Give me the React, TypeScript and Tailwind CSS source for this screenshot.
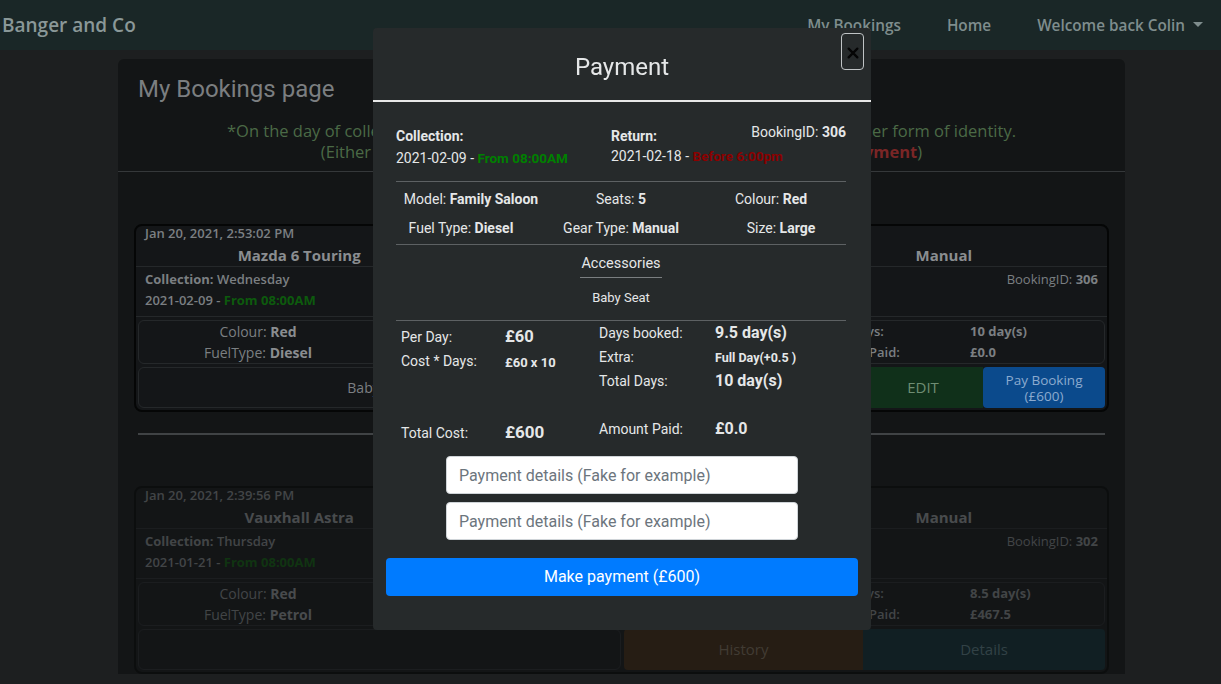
import React from 'react';

const sans = { fontFamily: '"Open Sans", "Noto Sans", sans-serif' };

interface Booking {
  created: string;
  car: string;
  type: string;
  gear: string;
  day: string;
  date: string;
  id: number;
  colour: string;
  fuel: string;
  perDay: string;
  cost: string;
  days: string;
  paid: string;
  accessories: string;
}

const bookings: Booking[] = [
  {
    created: 'Jan 20, 2021, 2:53:02 PM',
    car: 'Mazda 6 Touring',
    type: 'Family Saloon',
    gear: 'Manual',
    day: 'Wednesday',
    date: '2021-02-09',
    id: 306,
    colour: 'Red',
    fuel: 'Diesel',
    perDay: '£60',
    cost: '£600',
    days: '10 day(s)',
    paid: '£0.0',
    accessories: 'Baby Seat',
  },
  {
    created: 'Jan 20, 2021, 2:39:56 PM',
    car: 'Vauxhall Astra',
    type: 'Small Town Car',
    gear: 'Manual',
    day: 'Thursday',
    date: '2021-01-21',
    id: 302,
    colour: 'Red',
    fuel: 'Petrol',
    perDay: '£55',
    cost: '£467.5',
    days: '8.5 day(s)',
    paid: '£467.5',
    accessories: '',
  },
];

function BookingCard({ b, past }: { b: Booking; past?: boolean }) {
  return (
    <div
      className={`rounded-lg border-2 border-[#050606] bg-[#141618] text-[13px] text-[#7b7f82] ${
        past ? 'opacity-45' : ''
      }`}
      style={sans}
    >
      <div className="border-b border-[#25282a]">
        <div className="px-[9px] font-semibold leading-[14px]">{b.created}</div>
        <div className="grid grid-cols-3 px-[2px] pt-[5px] pb-[1px] text-[15px] font-bold leading-[20px] text-[#8a8d90]">
          <div className="text-center">{b.car}</div>
          <div className="text-center">{b.type}</div>
          <div className="text-center">{b.gear}</div>
        </div>
      </div>
      <div className="grid grid-cols-3 border-b border-[#25282a] px-[9px] pt-[2px] pb-[5px] font-semibold leading-[21px]">
        <div>
          <div>
            <b className="font-bold">Collection:</b> {b.day}
          </div>
          <div>
            {b.date} - <span className="font-bold text-[#0d5a0d]">From 08:00AM</span>
          </div>
        </div>
        <div>
          <div>
            <b className="font-bold">Return:</b> Friday
          </div>
          <div>
            2021-02-18 - <span className="font-bold text-[#5a0d0d]">Before 6:00pm</span>
          </div>
        </div>
        <div className="text-right font-normal">
          BookingID: <b className="font-bold">{b.id}</b>
        </div>
      </div>
      <div className="flex gap-[3px] px-[2px] pt-[3px]">
        <div className="flex h-[44px] w-[240px] flex-col items-center justify-center rounded-md border border-[#25282a] text-[14px] leading-[21px]">
          <div>
            Colour: <b className="text-[#8a8d90]">{b.colour}</b>
          </div>
          <div>
            FuelType: <b className="text-[#8a8d90]">{b.fuel}</b>
          </div>
        </div>
        <div className="flex h-[44px] w-[240px] flex-col items-center justify-center rounded-md border border-[#25282a] text-[14px] leading-[21px]">
          <div>
            Seats: <b>5</b>
          </div>
          <div>
            Size: <b>Large</b>
          </div>
        </div>
        <div className="flex h-[44px] flex-1 items-center rounded-md border border-[#25282a] font-semibold leading-[21px]">
          <div className="w-[80px] pl-[8px]">
            <div>Per Day:</div>
            <div>Cost:</div>
          </div>
          <div className="w-[110px]">
            <div className="font-bold">{b.perDay}</div>
            <div className="font-bold">{b.cost}</div>
          </div>
          <div className="w-[155px]">
            <div>Total Days:</div>
            <div>Amount Paid:</div>
          </div>
          <div className="font-bold">
            <div>{b.days}</div>
            <div>{b.paid}</div>
          </div>
        </div>
      </div>
      <div className="flex px-[2px] pt-[3px] pb-[2px]">
        <div className="flex h-[41px] w-[483px] items-center justify-center rounded-md border border-[#25282a] text-[14px]">
          {b.accessories}
        </div>
        {past ? (
          <div className="ml-[3px] flex flex-1 text-[15px]">
            <div className="flex w-[239px] items-center justify-center rounded-l bg-[#3d2712] text-[#7a6a58]">
              History
            </div>
            <div className="flex flex-1 items-center justify-center rounded-r bg-[#0f2c33] text-[#587880]">
              Details
            </div>
          </div>
        ) : (
          <div className="ml-[3px] flex flex-1 text-[15px]">
            <div className="flex w-[119px] items-center justify-center rounded-l bg-[#3d2712] text-[#8a7a68]">
              History
            </div>
            <div className="flex w-[120px] items-center justify-center bg-[#4a1014] text-[#9a7a7a]">
              Cancel
            </div>
            <div className="flex w-[120px] items-center justify-center bg-[#10301a] text-[#6f8d73]">
              EDIT
            </div>
            <div className="flex flex-1 flex-col items-center justify-center rounded bg-[#0b4a8c] text-[13.5px] leading-[16px] text-[#8cabcf]">
              <span>Pay Booking</span>
              <span>(£600)</span>
            </div>
          </div>
        )}
      </div>
    </div>
  );
}

function PaymentModal() {
  return (
    <div className="fixed inset-0 z-10">
      <div
        className="ml-[373px] mt-[28px] w-[498px] rounded bg-[#262a2b] text-[#e5e7e8]"
        style={{ fontFamily: 'Roboto, "Liberation Sans", sans-serif' }}
      >
        <div className="relative flex h-[74px] items-center justify-center border-b-2 border-[#e8e8e8]">
          <h2 className="pt-[5px] text-[24px] font-normal">Payment</h2>
          <button className="absolute right-[7px] top-[5px] flex h-[37px] w-[23px] items-center justify-center rounded-[4px] border border-[#bfc3c5] pt-[2px]">
            <svg width="14" height="14" viewBox="0 0 16 16">
              <path d="M3 3 L13 13 M13 3 L3 13" stroke="#050505" strokeWidth="2.6" strokeLinecap="round" />
            </svg>
          </button>
        </div>

        <div className="pl-[23px] pr-[25px] pt-[21px] text-[14px]">
          <div className="flex leading-[22px]">
            <div className="w-[215px] pt-[2px]">
              <div className="font-bold">Collection:</div>
              <div>
                2021-02-09 -{' '}
                <span className="text-[13.5px] font-bold text-[#008000]">From 08:00AM</span>
              </div>
            </div>
            <div className="flex-1">
              <div className="flex items-start justify-between">
                <span className="pt-[2px] font-bold">Return:</span>
                <span className="-mt-[2px]">
                  BookingID: <b>306</b>
                </span>
              </div>
              <div className="-mt-[2px]">
                2021-02-18 -{' '}
                <span className="text-[13.5px] font-bold text-[#8b0000]">Before 6:00pm</span>
              </div>
            </div>
          </div>

          <div className="mt-[12px] border-t border-[#5d6163]" />
          <div className="grid grid-cols-3 pt-[3px] text-center leading-[29px]">
            <div>
              Model: <b>Family Saloon</b>
            </div>
            <div>
              Seats: <b>5</b>
            </div>
            <div>
              Colour: <b>Red</b>
            </div>
            <div className="pr-[20px]">
              Fuel Type: <b>Diesel</b>
            </div>
            <div>
              Gear Type: <b>Manual</b>
            </div>
            <div className="pl-[20px]">
              Size: <b>Large</b>
            </div>
          </div>
          <div className="mt-[1px] border-t border-[#5d6163]" />
          <div className="flex flex-col items-center">
            <div className="mt-[10px] border-b border-[#7a7e80] px-[1px] pb-[5px] text-[14.5px] leading-[17px]">
              Accessories
            </div>
            <div className="mt-[12px] text-[13px] leading-[16px]">Baby Seat</div>
          </div>
          <div className="mt-[14px] border-t border-[#5d6163]" />

          <div className="flex">
            <div className="w-[203px] pl-[5px] pt-[4px]">
              <div className="flex h-[24px] items-center">
                <span className="w-[104px]">Per Day:</span>
                <b className="text-[16.5px]">£60</b>
              </div>
              <div className="flex h-[24px] items-center">
                <span className="w-[104px]">Cost * Days:</span>
                <b className="pt-[3px] text-[13px]">£60 x 10</b>
              </div>
            </div>
            <div>
              <div className="flex h-[24px] items-center">
                <span className="w-[116px]">Days booked:</span>
                <b className="text-[16px]">9.5 day(s)</b>
              </div>
              <div className="flex h-[24px] items-center">
                <span className="w-[116px]">Extra:</span>
                <b className="pt-[3px] text-[12.5px]">Full Day(+0.5 )</b>
              </div>
              <div className="flex h-[24px] items-center">
                <span className="w-[116px]">Total Days:</span>
                <b className="text-[16px]">10 day(s)</b>
              </div>
            </div>
          </div>
          <div className="mt-[24px] flex items-start">
            <div className="mt-[4px] flex h-[24px] w-[203px] items-center pl-[5px]">
              <span className="w-[104px]">Total Cost:</span>
              <b className="text-[17px]">£600</b>
            </div>
            <div className="flex h-[24px] items-center">
              <span className="w-[116px]">Amount Paid:</span>
              <b className="text-[16px]">£0.0</b>
            </div>
          </div>
        </div>

        <div className="mt-[11px] flex flex-col items-center gap-[8px]">
          <input
            className="h-[38px] w-[352px] rounded-[4px] border border-[#cfd4d8] bg-white px-[12px] text-[16px] text-[#495057] placeholder:text-[#6c757d]"
            placeholder="Payment details (Fake for example)"
          />
          <input
            className="h-[38px] w-[352px] rounded-[4px] border border-[#cfd4d8] bg-white px-[12px] text-[16px] text-[#495057] placeholder:text-[#6c757d]"
            placeholder="Payment details (Fake for example)"
          />
        </div>
        <div className="px-[13px] pt-[18px] pb-[34px]">
          <button className="h-[38px] w-full rounded-[4px] bg-[#007bff] text-[16px] text-white">
            Make payment (£600)
          </button>
        </div>
      </div>
    </div>
  );
}

export default function App() {
  return (
    <div className="relative h-[684px] w-full overflow-hidden bg-[#1d1f20]">
      <nav className="flex h-[50px] items-center bg-[#1a2727] text-[#7f8d8d]" style={sans}>
        <span className="pl-[2px] text-[19px] font-semibold text-[#8a9898]">Banger and Co</span>
        <div className="ml-auto flex items-center pr-[18px] text-[15.3px] font-semibold">
          <span>My Bookings</span>
          <span className="ml-[46px]">Home</span>
          <span className="ml-[46px]">Welcome back Colin</span>
          <span className="ml-[8px] mb-[2px] h-0 w-0 border-x-[5px] border-t-[5px] border-x-transparent border-t-[#7f8d8d]" />
        </div>
      </nav>

      <main className="ml-[118px] mt-[9px] w-[1007px] rounded-t-md bg-[#131516]">
        <div className="border-b border-[#35383a] px-[20px] pt-[15px] pb-[9px]">
          <h1
            className="text-[24px] leading-[30px] text-[#7b7e80]"
            style={{ fontFamily: 'Roboto, sans-serif' }}
          >
            My Bookings page
          </h1>
          <div
            className="mt-[16px] text-center text-[16.5px] leading-[21px] text-[#4b6a46]"
            style={sans}
          >
            <p>
              *On the day of collection please make sure to bring your driving licence and one other form of identity.
            </p>
            <p>
              (Either a utility bill or bank statement dated within{' '}
              <b className="text-[#7a2626]">3 months of the payment</b>)
            </p>
          </div>
        </div>
        <div className="px-[16px] pt-[52px]">
          <BookingCard b={bookings[0]} />
          <div className="mx-[4px] mt-[21px] mb-[51px] border-t-2 border-[#404345]" />
          <BookingCard b={bookings[1]} past />
        </div>
      </main>

      <PaymentModal />
    </div>
  );
}
